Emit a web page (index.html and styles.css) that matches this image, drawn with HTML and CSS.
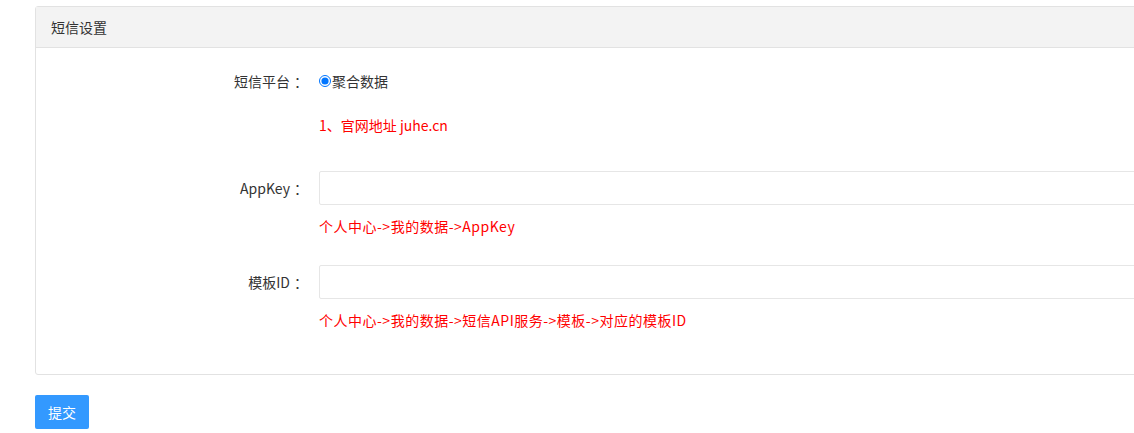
FILE: index.html
```html
<!DOCTYPE html>
<html lang="zh-CN">
<head>
    <meta charset="UTF-8">
    <meta name="viewport" content="width=device-width, initial-scale=1.0">
    <title>短信设置</title>
    <link rel="stylesheet" href="styles.css">
</head>
<body>
    <form class="wrap">
        <div class="panel">
            <div class="panel-head">短信设置</div>
            <div class="panel-body">
                <div class="group group-first">
                    <label class="label">短信平台<span class="colon">：</span></label>
                    <div class="control">
                        <label class="radio"><input type="radio" name="platform" checked>聚合数据</label>
                    </div>
                </div>
                <div class="group group-site">
                    <div class="label"></div>
                    <div class="control">
                        <p class="tip tip-big">1、官网地址 juhe.cn</p>
                    </div>
                </div>
                <div class="group">
                    <label class="label">AppKey<span class="colon">：</span></label>
                    <div class="control">
                        <input type="text" class="input">
                        <p class="tip">个人中心-&gt;我的数据-&gt;AppKey</p>
                    </div>
                </div>
                <div class="group">
                    <label class="label">模板ID<span class="colon">：</span></label>
                    <div class="control">
                        <input type="text" class="input">
                        <p class="tip">个人中心-&gt;我的数据-&gt;短信API服务-&gt;模板-&gt;对应的模板ID</p>
                    </div>
                </div>
            </div>
        </div>
        <button type="button" class="btn">提交</button>
    </form>
</body>
</html>
```

FILE: styles.css
```css
body {
    margin: 0;
    overflow: hidden;
    font-family: "Microsoft YaHei", "Noto Sans CJK SC", "Noto Sans", sans-serif;
    font-size: 14px;
    color: #333;
}

.wrap {
    padding: 6px 0 0 35px;
}

.panel {
    width: 1130px;
    border: 1px solid #e2e2e2;
    border-radius: 3px;
    background: #fff;

    .panel-head {
        height: 40px;
        line-height: 40px;
        padding: 0 15px;
        background: #f3f3f3;
        border-bottom: 1px solid #e2e2e2;
    }

    .panel-body {
        padding: 16px 0 15px;
    }
}

.group {
    display: flex;
    margin-bottom: 29px;

    &.group-first {
        margin-bottom: 17px;
    }

    &.group-site {
        margin-bottom: 36px;
    }

    .label {
        width: 268px;
        margin-right: 15px;
        line-height: 34px;
        text-align: right;
        flex-shrink: 0;
    }

    .colon {
        padding-left: 4px;
        margin-right: -4px;
    }

    .control {
        flex: 1;
    }
}

.radio {
    display: flex;
    align-items: center;
    height: 34px;

    input {
        margin: 0 1px 0 0;
        width: 12px;
        height: 12px;
    }
}

.input {
    display: block;
    box-sizing: border-box;
    width: 100%;
    height: 34px;
    border: 1px solid #e6e6e6;
    border-radius: 2px;
    outline: none;
}

.tip {
    margin: 11px 0 0;
    line-height: 20px;
    color: #f00;
    letter-spacing: 0.5px;

    &.tip-big {
        margin: 0;
        letter-spacing: 0;
    }
}

.btn {
    display: block;
    margin-top: 20px;
    width: 54px;
    height: 34px;
    padding: 0;
    border: 0;
    border-radius: 2px;
    background: #3399ff;
    color: #fff;
    font-family: inherit;
    font-size: 14px;
}
```
